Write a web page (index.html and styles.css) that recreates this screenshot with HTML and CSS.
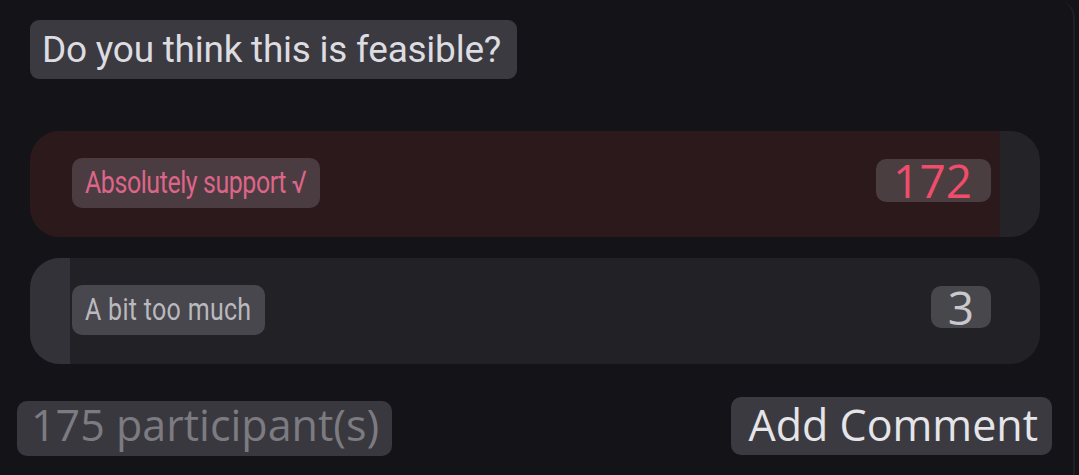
FILE: index.html
```html
<!DOCTYPE html>
<html lang="en">
<head>
<meta charset="utf-8">
<title>Poll</title>
<link rel="stylesheet" href="styles.css">
</head>
<body>
<div class="frame">
  <div class="poll">
    <div class="question">Do you think this is feasible?</div>
    <div class="options">
      <div class="option option-voted">
        <div class="fill" style="width: 96%"></div>
        <div class="option-body">
          <span class="label"><span class="label-text">Absolutely support √</span></span>
          <span class="count">172</span>
        </div>
      </div>
      <div class="option">
        <div class="fill" style="width: 4%"></div>
        <div class="option-body">
          <span class="label"><span class="label-text">A bit too much</span></span>
          <span class="count">3</span>
        </div>
      </div>
    </div>
    <div class="footer">
      <span class="participants">175 participant(s)</span>
      <span class="comment">Add Comment</span>
    </div>
  </div>
</div>
</body>
</html>
```
FILE: styles.css
```css
html, body {
  margin: 0;
  padding: 0;
  background: #141318;
}

.frame {
  width: 1075px;
  height: 475px;
  box-sizing: border-box;
  border-right: 2px solid #201f24;
  border-top-right-radius: 18px;
  overflow: hidden;
}

.poll {
  display: flex;
  flex-direction: column;
  padding: 20px 0 0 0;
}

.question {
  align-self: flex-start;
  margin-left: 30px;
  height: 59px;
  line-height: 60px;
  padding: 0 16px 0 12px;
  background: #3b3a40;
  border-radius: 9px;
  color: #dddce1;
  font-family: Roboto, "Noto Sans", sans-serif;
  font-size: 37px;
  letter-spacing: -0.25px;
  white-space: nowrap;
}

.options {
  display: flex;
  flex-direction: column;
  gap: 21px;
  margin: 52px 0 0 30px;
  width: 1010px;
}

.option {
  display: grid;
  height: 106px;
  border-radius: 30px;
  overflow: hidden;
  background: #222126;
}

.option-voted {
  background: #242328;
}

.fill {
  grid-area: 1 / 1;
  height: 100%;
  background: #333238;
}

.option-voted .fill {
  background: #2b191b;
}

.option-body {
  grid-area: 1 / 1;
  display: flex;
  align-items: center;
  justify-content: space-between;
  padding: 0 49px 0 42px;
}

.label {
  height: 50px;
  line-height: 50px;
  padding: 0 14px 0 13px;
  border-radius: 10px;
  background: #48474d;
  color: #bab9be;
  font-family: Roboto, "Noto Sans", sans-serif;
  font-size: 25px;
  letter-spacing: 0.3px;
  white-space: nowrap;
  margin-top: -2px;
}

.label-text {
  display: inline-block;
  transform: scaleY(1.24);
}

.option-voted .label {
  background: #4a3c40;
  color: #dd6589;
  letter-spacing: -0.45px;
  padding: 0 14px 0 13px;
}

.count {
  height: 42px;
  line-height: 43px;
  padding: 0 17px;
  border-radius: 10px;
  background: #48474c;
  color: #c9c8cd;
  font-family: "Open Sans", "Noto Sans", sans-serif;
  font-size: 46px;
  margin-top: -8px;
}

.option-voted .count {
  height: 43px;
  background: #4a3e41;
  color: #f04c6b;
  padding: 0 19px 0 17px;
}

.footer {
  display: flex;
  justify-content: space-between;
  align-items: flex-start;
  margin: 33px 0 0 17px;
  width: 1035px;
}

.participants {
  margin-top: 4px;
  height: 47px;
  line-height: 47px;
  padding: 0 13px 8px 14px;
  border-radius: 10px;
  background: #39383e;
  color: #7c7b81;
  font-family: "Open Sans", "Noto Sans", sans-serif;
  font-size: 43px;
  white-space: nowrap;
}

.comment {
  height: 55px;
  line-height: 55px;
  padding: 0 14px 3px 18px;
  border-radius: 10px;
  background: #3b3a40;
  color: #e5e5e9;
  font-family: "Open Sans", "Noto Sans", sans-serif;
  font-size: 43px;
  white-space: nowrap;
}
```
